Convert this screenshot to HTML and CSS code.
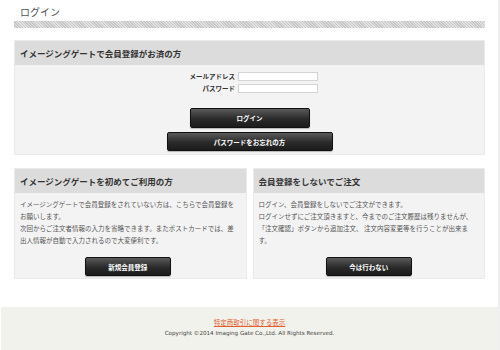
FILE: index.html
```html
<!DOCTYPE html>
<html lang="ja">
  <head>
    <meta charset="UTF-8" />
    <meta name="viewport" content="width=device-width, initial-scale=1.0" />
    <title>ログイン</title>
    <link rel="stylesheet" href="styles.css">
  </head>
  <body>
    <div class="page">
      <h1 class="page-title">ログイン</h1>
      <div class="hatch"></div>

      <div class="box member">
        <h2 class="box-head">イメージングゲートで会員登録がお済の方</h2>
        <div class="box-body">
          <div class="login-form">
            <label class="label">メールアドレス</label>
            <input class="field" type="text" />
            <label class="label">パスワード</label>
            <input class="field" type="password" />
          </div>
          <div class="btn-col">
            <a class="btn btn-login">ログイン</a>
            <a class="btn btn-forgot">パスワードをお忘れの方</a>
          </div>
        </div>
      </div>

      <div class="cards">
        <div class="box card card-new">
          <h2 class="box-head">イメージングゲートを初めてご利用の方</h2>
          <div class="box-body">
            <p class="text">
              イメージングゲートで会員登録をされていない方は、こちらで会員登録をお願いします。<br />
              次回からご注文者情報の入力を省略できます。またポストカードでは、差出人情報が自動で入力されるので大変便利です。
            </p>
            <div class="btn-col">
              <a class="btn btn-small">新規会員登録</a>
            </div>
          </div>
        </div>
        <div class="box card">
          <h2 class="box-head">会員登録をしないでご注文</h2>
          <div class="box-body">
            <p class="text">
              ログイン、会員登録をしないでご注文ができます。<br />
              ログインせずにご注文頂きますと、今までのご注文履歴は残りませんが、「注文確認」ボタンから追加注文、 注文内容変更等を行うことが出来ます。
            </p>
            <div class="btn-col">
              <a class="btn btn-small">今は行わない</a>
            </div>
          </div>
        </div>
      </div>
    </div>

    <footer class="footer">
      <a class="footer-link" href="#">特定商取引に関する表示</a>
      <p class="copyright">Copyright ©2014 Imaging Gate Co.,Ltd. All Rights Reserved.</p>
    </footer>
  </body>
</html>
```

FILE: styles.css
```css
* {
  margin: 0;
  padding: 0;
  box-sizing: border-box;
}
body {
  background-color: #fff;
  color: #444;
  font-family: "Noto Sans CJK JP", "Noto Sans", sans-serif;
  border-right: 2px solid #f0f0f0;
  min-height: 350px;
}

.page {
  padding: 0 13px 28px 14px;
}

.page-title {
  font-size: 10px;
  font-weight: normal;
  line-height: 14px;
  padding: 5px 0 2px 6px;
  color: #555;
}

.hatch {
  height: 7px;
  background: repeating-linear-gradient(
    45deg,
    #c6c6c6 0,
    #c6c6c6 1px,
    #e2e2e2 1px,
    #e2e2e2 2px
  );
}

.box {
  background-color: #f3f3f3;
  border: 1px solid #ebebeb;
}

.box-head {
  height: 24px;
  line-height: 24px;
  padding-left: 5px;
  background-color: #dcdcdc;
  font-size: 8.5px;
  font-weight: bold;
  color: #333;
}

.member {
  margin-top: 12px;
}

.member .box-body {
  padding: 7px 0 3px;
}

.login-form {
  display: grid;
  grid-template-columns: 220px 80px;
  column-gap: 3px;
  row-gap: 3px;
  align-items: center;
}

.label {
  text-align: right;
  font-size: 6.5px;
  font-weight: bold;
  color: #333;
  line-height: 9px;
}

.field {
  height: 9px;
  width: 80px;
  border: 1px solid #d4d4d4;
  background: #fff;
}

.btn-col {
  display: flex;
  flex-direction: column;
  align-items: center;
  gap: 4px;
}

.member .btn-col {
  margin-top: 15px;
}

.btn {
  display: flex;
  justify-content: center;
  align-items: center;
  height: 20px;
  color: #fff;
  font-size: 6.5px;
  font-weight: bold;
  text-decoration: none;
  background: linear-gradient(#5a5a5a, #2a2a2a 55%, #1c1c1c);
  border: 1px solid #111;
  border-radius: 2px;
  box-shadow: 0 1px 1px rgba(0, 0, 0, 0.25);
}

.btn-login {
  width: 120px;
}

.btn-forgot {
  width: 166px;
  height: 19px;
}

.cards {
  display: grid;
  grid-template-columns: 1fr 1fr;
  column-gap: 6px;
  margin-top: 13px;
}

.card .box-body {
  padding: 5px 5px 2px;
}

.card-new .box-body {
  padding-right: 10px;
}

.text {
  font-size: 6.5px;
  line-height: 12px;
  color: #555;
  height: 48px;
}

.card .btn-col {
  margin-top: 11px;
}

.btn-small {
  width: 86px;
  height: 19px;
}

.footer {
  background-color: #f2f2ec;
  text-align: center;
  padding: 10px 0 14px;
  margin-left: 1px;
}

.footer-link {
  display: block;
  font-size: 6.5px;
  line-height: 11px;
  color: #e0602e;
}

.copyright {
  font-family: "DejaVu Sans", sans-serif;
  font-size: 5.6px;
  line-height: 11px;
  color: #444;
}
```
